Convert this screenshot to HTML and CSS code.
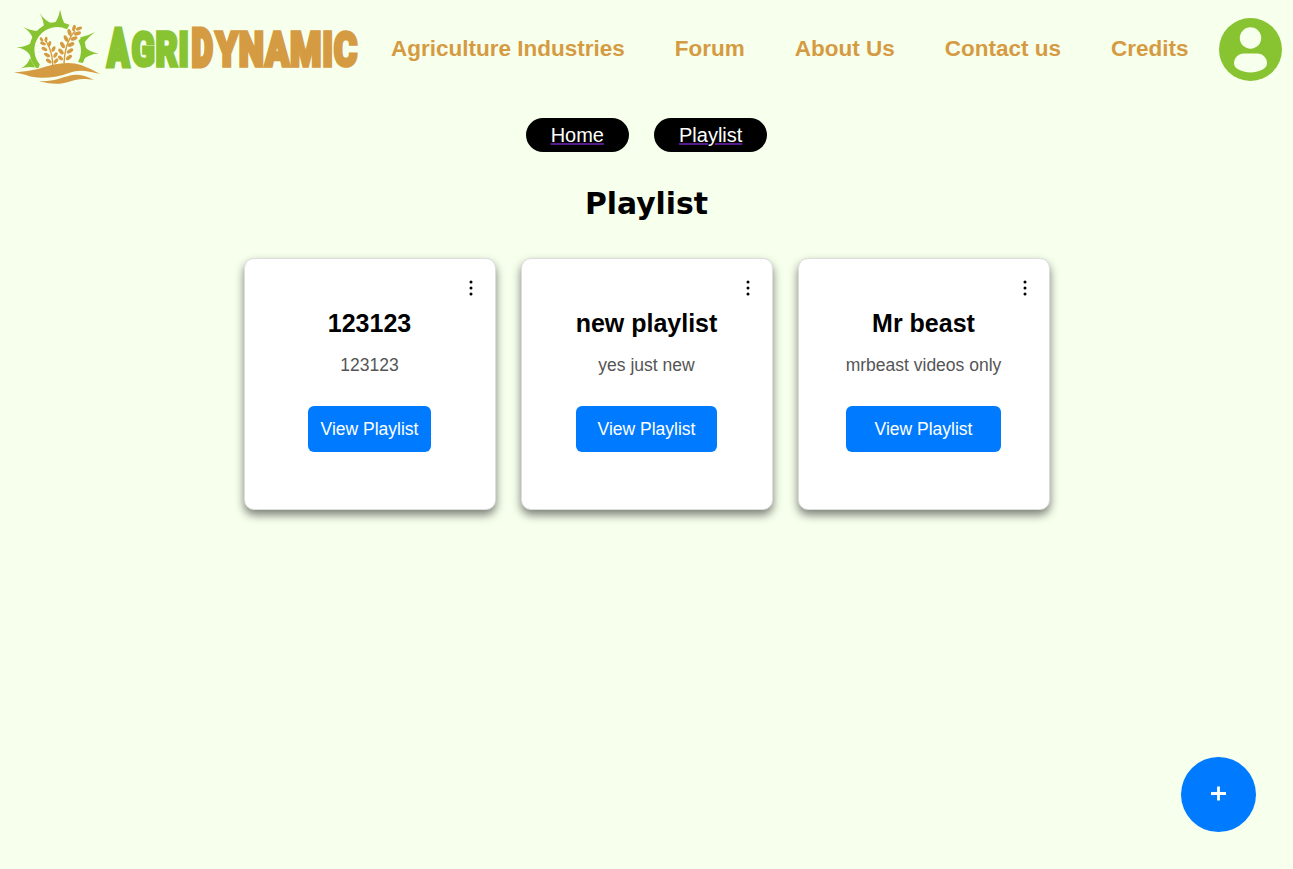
FILE: index.html
```html
<!DOCTYPE html>
<html lang="en">
<head>
<meta charset="utf-8">
<title>Playlist</title>
<link rel="stylesheet" href="styles.css">
</head>
<body>
<header class="header">
  <svg class="logo" viewBox="0 0 370 96" width="370" height="96" role="img" aria-label="AgriDynamic">
    <g class="green">
      <path d="M36 68 A28 28 0 0 1 69.500 24.700 L67 29.200 A22.800 22.800 0 0 0 39.800 64.500 L38.500 68Z"/>
      <path d="M78.500 40.500 L82.500 37 A28 28 0 0 1 83 63 L78 62 A23 23 0 0 0 78.500 40.500Z"/>
      <path d="M44 29 Q44 20 39.500 13 Q45 21 53 24Z"/>
      <path d="M54 24 Q59 18 60 9.500 Q61.500 18 65 25Z"/>
      <path d="M33 39 Q31 32 23 27 Q31 31 39 31Z"/>
      <path d="M30 55 Q26 49 16.500 47.300 Q26 47 31 43Z"/>
      <path d="M35 67.500 Q28 66 20.500 68.500 Q28 65 30 58Z"/>
      <path d="M80 37.500 Q88 36 95 32 Q88 37 84 43Z"/>
      <path d="M84 46 Q89 52 98.500 53.500 Q89 54 83 60Z"/>
    </g>
    <g class="gold">
      <path d="M14 72.500 Q25 72 38 69 C55 63 70 61 81 65 Q92 69 100 74 C87 71 80 69 69 73 C52 79 35 79 26 75 Q20 73 14 72.500Z"/>
      <path d="M39 81 C53 82 60 78 70 75.500 Q81 73 94 80 C83 78 77 79 70 81.500 C57 86 47 83 39 81Z"/>
      <path class="stem" d="M52.700 69 Q53.500 53 46 41 M64 67 Q64 43 75 31"/>
      <g>
        <ellipse cx="41.500" cy="39.500" rx="2.400" ry="1.400" transform="rotate(55 41.500 39.500)"/>
        <ellipse cx="46" cy="39.500" rx="2.700" ry="1.500" transform="rotate(100 46 39.500)"/>
        <ellipse cx="43" cy="43.500" rx="3" ry="1.600" transform="rotate(20 43 43.500)"/>
        <ellipse cx="49.500" cy="44" rx="3" ry="1.600" transform="rotate(110 49.500 44)"/>
        <ellipse cx="44.500" cy="49" rx="3.200" ry="1.700" transform="rotate(25 44.500 49)"/>
        <ellipse cx="53.500" cy="49" rx="3" ry="1.700" transform="rotate(115 53.500 49)"/>
        <ellipse cx="47" cy="55" rx="3.300" ry="1.700" transform="rotate(30 47 55)"/>
        <ellipse cx="55.500" cy="55" rx="3" ry="1.700" transform="rotate(120 55.500 55)"/>
        <ellipse cx="48.700" cy="61" rx="3.200" ry="1.700" transform="rotate(35 48.700 61)"/>
        <ellipse cx="56" cy="61" rx="3" ry="1.700" transform="rotate(130 56 61)"/>
      </g>
      <g>
        <ellipse cx="79" cy="28.500" rx="3.200" ry="1.700" transform="rotate(-22 79 28.500)"/>
        <ellipse cx="74" cy="28" rx="3.200" ry="1.700" transform="rotate(105 74 28)"/>
        <ellipse cx="77.500" cy="33.500" rx="3.600" ry="1.900" transform="rotate(-15 77.500 33.500)"/>
        <ellipse cx="69.500" cy="32.500" rx="3.500" ry="1.900" transform="rotate(75 69.500 32.500)"/>
        <ellipse cx="74" cy="38.500" rx="3.600" ry="1.900" transform="rotate(-20 74 38.500)"/>
        <ellipse cx="66" cy="38.500" rx="3.500" ry="1.900" transform="rotate(65 66 38.500)"/>
        <ellipse cx="71" cy="44.500" rx="3.600" ry="1.900" transform="rotate(-25 71 44.500)"/>
        <ellipse cx="62.500" cy="45" rx="3.500" ry="1.900" transform="rotate(60 62.500 45)"/>
        <ellipse cx="70" cy="51" rx="3.600" ry="1.900" transform="rotate(-32 70 51)"/>
        <ellipse cx="61" cy="51.500" rx="3.500" ry="1.900" transform="rotate(50 61 51.500)"/>
        <ellipse cx="69" cy="57.500" rx="3.500" ry="1.900" transform="rotate(-38 69 57.500)"/>
        <ellipse cx="60.500" cy="58" rx="3" ry="1.700" transform="rotate(45 60.500 58)"/>
      </g>
    </g>
    <g class="wordmark">
      <text class="green cap" x="107.500" y="65.500" textLength="21.500" lengthAdjust="spacingAndGlyphs">A</text>
      <text class="green" x="131.500" y="66.200" textLength="58" lengthAdjust="spacingAndGlyphs">GRI</text>
      <text class="gold cap" x="191.700" y="65.500" textLength="21" lengthAdjust="spacingAndGlyphs">D</text>
      <text class="gold" x="215.500" y="66.200" textLength="142.500" lengthAdjust="spacingAndGlyphs">YNAMIC</text>
    </g>
  </svg>
  <nav class="nav">
    <a>Agriculture Industries</a>
    <a>Forum</a>
    <a>About Us</a>
    <a>Contact us</a>
    <a>Credits</a>
  </nav>
  <svg class="avatar" viewBox="0 0 63 63" width="63" height="63">
    <circle class="green" cx="31.500" cy="31.500" r="31.500"/>
    <circle class="cut" cx="31.500" cy="20" r="10.700"/>
    <path class="cut" d="M25 35.500H38C44 35.500 48 40 48 45.500C48 51 39 54.500 31.500 54.500S15 51 15 45.500C15 40 19 35.500 25 35.500Z"/>
  </svg>
</header>
<main class="main">
  <div class="crumbs">
    <a class="crumb"><span>Home</span></a>
    <a class="crumb"><span>Playlist</span></a>
  </div>
  <h1 class="title">Playlist</h1>
  <div class="cards">
    <article class="card">
      <svg class="dots" viewBox="0 0 4 16" width="4" height="16"><circle cx="2" cy="2" r="1.500"/><circle cx="2" cy="8" r="1.500"/><circle cx="2" cy="14" r="1.500"/></svg>
      <div class="content"><h2>123123</h2><p>123123</p><button>View Playlist</button></div>
    </article>
    <article class="card">
      <svg class="dots" viewBox="0 0 4 16" width="4" height="16"><circle cx="2" cy="2" r="1.500"/><circle cx="2" cy="8" r="1.500"/><circle cx="2" cy="14" r="1.500"/></svg>
      <div class="content"><h2>new playlist</h2><p>yes just new</p><button>View Playlist</button></div>
    </article>
    <article class="card">
      <svg class="dots" viewBox="0 0 4 16" width="4" height="16"><circle cx="2" cy="2" r="1.500"/><circle cx="2" cy="8" r="1.500"/><circle cx="2" cy="14" r="1.500"/></svg>
      <div class="content"><h2>Mr beast</h2><p>mrbeast videos only</p><button>View Playlist</button></div>
    </article>
  </div>
</main>
<button class="add" aria-label="Add playlist"><svg viewBox="0 0 15 15" width="15" height="15"><path d="M7.500 .5V14.500M0 7.500H15"/></svg></button>
</body>
</html>
```
FILE: styles.css
```css
* { box-sizing: border-box; }
body {
  margin: 0;
  height: 869px;
  overflow: hidden;
  background: #f7ffed;
  font-family: "Liberation Sans", Arial, sans-serif;
}
.header {
  display: flex;
  align-items: center;
  height: 98px;
  padding-right: 11px;
}
.logo { flex: none; margin-bottom: 2px; }
.green { fill: #88c431; }
.gold { fill: #d59b42; }
.stem { fill: none; stroke: #d59b42; stroke-width: 1.4; }
.wordmark text {
  font-family: Roboto, sans-serif;
  font-weight: 900;
  font-size: 48.4px;
  letter-spacing: 1px;
  stroke-width: 3.6;
}
.wordmark text.cap { font-size: 52.5px; letter-spacing: 0; stroke-width: 5; }
.wordmark .green { stroke: #88c431; }
.wordmark .gold { stroke: #d59b42; }
.nav {
  display: flex;
  gap: 50px;
  margin-left: 21px;
  margin-bottom: 1px;
  white-space: nowrap;
  font-size: 22.5px;
  line-height: 27px;
  font-weight: 700;
  color: #d59b42;
}
.avatar { flex: none; margin-left: auto; }
.cut { fill: #f7ffed; }
.main { padding-top: 20px; }
.crumbs { display: flex; justify-content: center; gap: 25px; }
.crumb {
  height: 34px;
  padding: 0 25px;
  border-radius: 17px;
  background: #000;
  font-size: 20px;
  line-height: 34px;
  color: #551a8b;
  text-decoration: underline;
  text-decoration-thickness: 2px;
}
.crumb span { color: #fff; }
.title {
  margin: 33px 0 36px;
  text-align: center;
  font: 700 29.8px/37px "DejaVu Sans", Verdana, sans-serif;
}
.cards { display: flex; justify-content: center; gap: 25px; }
.card {
  position: relative;
  display: flex;
  justify-content: center;
  width: 252px;
  height: 252px;
  padding-top: 50px;
  border: 1px solid #ddd;
  border-radius: 10px;
  background: #fff;
  box-shadow: 0 5px 10px rgba(0, 0, 0, .5);
}
.dots { position: absolute; top: 21px; right: 22px; }
.content { display: flex; flex-direction: column; text-align: center; }
.content h2 { margin: 0; font-size: 25px; line-height: 29px; }
.content p { margin: 17px 0 31px; font-size: 17.5px; line-height: 20px; color: #555; }
.content button {
  height: 46px;
  padding: 0 12.5px;
  border: 0;
  border-radius: 6px;
  background: #007bff;
  color: #fff;
  font: 17.5px "Liberation Sans", Arial, sans-serif;
}
.add {
  position: fixed;
  right: 37px;
  bottom: 37px;
  display: flex;
  align-items: center;
  justify-content: center;
  width: 75px;
  height: 75px;
  padding: 0 0 3px;
  border: 0;
  border-radius: 50%;
  background: #007bff;
}
.add path { stroke: #fff; stroke-width: 2.8; }
```
